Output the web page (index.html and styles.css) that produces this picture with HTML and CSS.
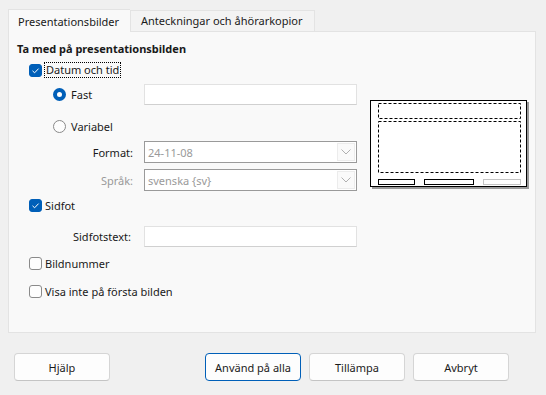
FILE: index.html
```html
<!DOCTYPE html>
<html lang="sv">
<head>
<meta charset="utf-8">
<title>Sidhuvud och sidfot</title>
<link rel="stylesheet" href="styles.css">
</head>
<body>
<div class="dialog">
  <div class="tabs">
    <div class="tab active">Presentationsbilder</div>
    <div class="tab">Anteckningar och åhörarkopior</div>
  </div>
  <div class="panel">
    <div class="heading">Ta med på presentationsbilden</div>
    <div class="content">
      <div class="form">
        <div class="row r-datum ind-1">
          <span class="check on"><svg viewBox="0 0 13 13"><path d="M3.5 6.8 L5.6 8.8 L9.6 4.6" fill="none" stroke="#fff" stroke-width="1"/></svg></span>
          <span class="lbl focus">Datum och tid</span>
        </div>
        <div class="row r-fast ind-2">
          <span class="radio on"></span>
          <span class="lbl rlbl">Fast</span>
          <span class="field input fast-input"></span>
        </div>
        <div class="row r-var ind-2">
          <span class="radio"></span>
          <span class="lbl rlbl">Variabel</span>
        </div>
        <div class="row r-format">
          <span class="side">Format:</span>
          <span class="field select"><span class="val">24-11-08</span><span class="drop"><svg viewBox="0 0 10 6"><path d="M0.5 0.5 L5 5 L9.5 0.5" fill="none" stroke="#b0b0b0" stroke-width="1"/></svg></span></span>
        </div>
        <div class="row r-sprak">
          <span class="side dis">Språk:</span>
          <span class="field select"><span class="val">svenska {sv}</span><span class="drop"><svg viewBox="0 0 10 6"><path d="M0.5 0.5 L5 5 L9.5 0.5" fill="none" stroke="#b0b0b0" stroke-width="1"/></svg></span></span>
        </div>
        <div class="row r-sidfot ind-1">
          <span class="check on"><svg viewBox="0 0 13 13"><path d="M3.5 6.8 L5.6 8.8 L9.6 4.6" fill="none" stroke="#fff" stroke-width="1"/></svg></span>
          <span class="lbl">Sidfot</span>
        </div>
        <div class="row r-sidtext">
          <span class="side sidtext">Sidfotstext:</span>
          <span class="field input"></span>
        </div>
        <div class="row r-bild ind-1">
          <span class="check"></span>
          <span class="lbl">Bildnummer</span>
        </div>
        <div class="row r-visa ind-1">
          <span class="check"></span>
          <span class="lbl">Visa inte på första bilden</span>
        </div>
      </div>
      <div class="preview">
        <svg width="162" height="92" viewBox="0 0 162 92">
          <rect x="3" y="3" width="157" height="87" fill="#9a9a9a"/>
          <rect x="1.5" y="1.5" width="156" height="86" fill="#fff" stroke="#000" stroke-width="1"/>
          <rect x="9.5" y="4.5" width="142" height="15" fill="none" stroke="#000" stroke-width="1" stroke-dasharray="3 2"/>
          <rect x="9.5" y="22.5" width="142" height="51" fill="none" stroke="#000" stroke-width="1" stroke-dasharray="3 2"/>
          <rect x="9.5" y="80.5" width="36" height="5" fill="none" stroke="#000" stroke-width="1"/>
          <rect x="55.5" y="80.5" width="49" height="5" fill="none" stroke="#000" stroke-width="1"/>
          <rect x="114.5" y="80.5" width="37" height="5" fill="none" stroke="#c4c4c4" stroke-width="1"/>
        </svg>
      </div>
    </div>
  </div>
  <div class="buttons">
    <button class="btn">Hjälp</button>
    <div class="btn-group">
      <button class="btn default">Använd på alla</button>
      <button class="btn">Tillämpa</button>
      <button class="btn">Avbryt</button>
    </div>
  </div>
</div>
</body>
</html>
```
FILE: styles.css
```css
html, body {
  margin: 0;
  padding: 0;
}
body {
  width: 546px;
  height: 395px;
  background: #f0f0f0;
  font-family: "Segoe UI", "Noto Sans", "Open Sans", sans-serif;
  font-size: 11px;
  color: #1a1a1a;
  overflow: hidden;
}
.dialog {
  padding: 9px 10px 0 8px;
}
.tabs {
  display: flex;
  align-items: flex-end;
  height: 22px;
}
.tab {
  box-sizing: border-box;
  height: 21px;
  line-height: 20px;
  padding: 0 10px;
  border: 1px solid #e3e3e3;
  border-bottom: none;
  background: #f3f3f3;
  white-space: nowrap;
}
.tab.active {
  height: 23px;
  width: 122px;
  padding: 0 9px;
  line-height: 24px;
  background: #f9f9f9;
  border-right: none;
  position: relative;
  z-index: 1;
  margin-bottom: -1px;
}
.tab:not(.active) {
  width: 185px;
}
.panel {
  box-sizing: border-box;
  height: 302px;
  border: 1px solid #e3e3e3;
  background: #f9f9f9;
  padding: 8px 0 0 8px;
}
.heading {
  height: 18px;
  line-height: 18px;
  font-weight: bold;
}
.content {
  display: flex;
}
.form {
  width: 353px;
  display: flex;
  flex-direction: column;
}
.row {
  display: flex;
  align-items: center;
  height: 22px;
}
.ind-1 { padding-left: 12px; }
.ind-2 { padding-left: 36px; }
.r-datum { margin-top: 1px; }
.r-fast { margin-top: 3px; height: 21px; }
.r-var { margin-top: 10px; }
.r-format { margin-top: 4px; }
.r-sprak { margin-top: 6px; }
.r-sidfot { margin-top: 3px; }
.r-sidtext { margin-top: 10px; height: 21px; }
.r-bild { margin-top: 5px; }
.r-visa { margin-top: 6px; }

.check {
  box-sizing: border-box;
  width: 13px;
  height: 13px;
  border: 1px solid #8a8a8a;
  border-radius: 3px;
  background: #fdfdfd;
  flex: none;
  display: flex;
}
.check.on {
  background: #005fb8;
  border-color: #005fb8;
}
.check svg {
  width: 13px;
  height: 13px;
  margin: -1px;
}
.lbl {
  margin-left: 3px;
  white-space: nowrap;
}
.focus {
  outline: 1px dotted #000;
  outline-offset: 0;
  padding: 0 1px;
  line-height: 14px;
}
.radio {
  box-sizing: border-box;
  width: 13px;
  height: 13px;
  border: 1px solid #8a8a8a;
  border-radius: 50%;
  background: #fdfdfd;
  flex: none;
}
.radio.on {
  border: 4px solid #005fb8;
  background: #fff;
}
.rlbl {
  margin-left: 5px;
}
.fast-input {
  margin-left: auto;
}
.field {
  box-sizing: border-box;
  width: 213px;
  height: 100%;
  background: #fff;
  flex: none;
}
.r-fast .field,
.r-sidtext .field {
  margin-right: 13px;
}
.input {
  border: 1px solid #e2e2e2;
  border-bottom-color: #d0d0d0;
}
.side {
  width: 116px;
  text-align: right;
  margin-right: 11px;
  white-space: nowrap;
}
.side.sidtext {
  width: 114px;
  margin-right: 13px;
}
.side.dis {
  color: #9a9a9a;
}
.select {
  display: flex;
  align-items: center;
  border: 1px solid #9a9a9a;
  color: #9a9a9a;
}
.select .val {
  flex: 1;
  padding-left: 3px;
}
.select .drop {
  box-sizing: border-box;
  width: 18px;
  height: 18px;
  margin-right: 1px;
  border: 1px solid #ececec;
  background: #fafafa;
  display: flex;
  align-items: center;
  justify-content: center;
}
.select .drop svg {
  width: 10px;
  height: 6px;
}
.preview {
  margin-top: 41px;
  height: 92px;
}
.preview svg {
  display: block;
  margin-left: -1px;
}
.buttons {
  display: flex;
  justify-content: space-between;
  margin-top: 20px;
  padding: 0 27px 0 6px;
}
.btn-group {
  display: flex;
  gap: 8px;
}
.btn {
  box-sizing: border-box;
  width: 96px;
  height: 28px;
  border: 1px solid #d5d5d5;
  border-bottom-color: #c4c4c4;
  border-radius: 4px;
  background: #fdfdfd;
  font-family: inherit;
  font-size: 11px;
  color: #1a1a1a;
  padding: 0;
}
.btn.default {
  border: 1px solid #005fb8;
}
```
